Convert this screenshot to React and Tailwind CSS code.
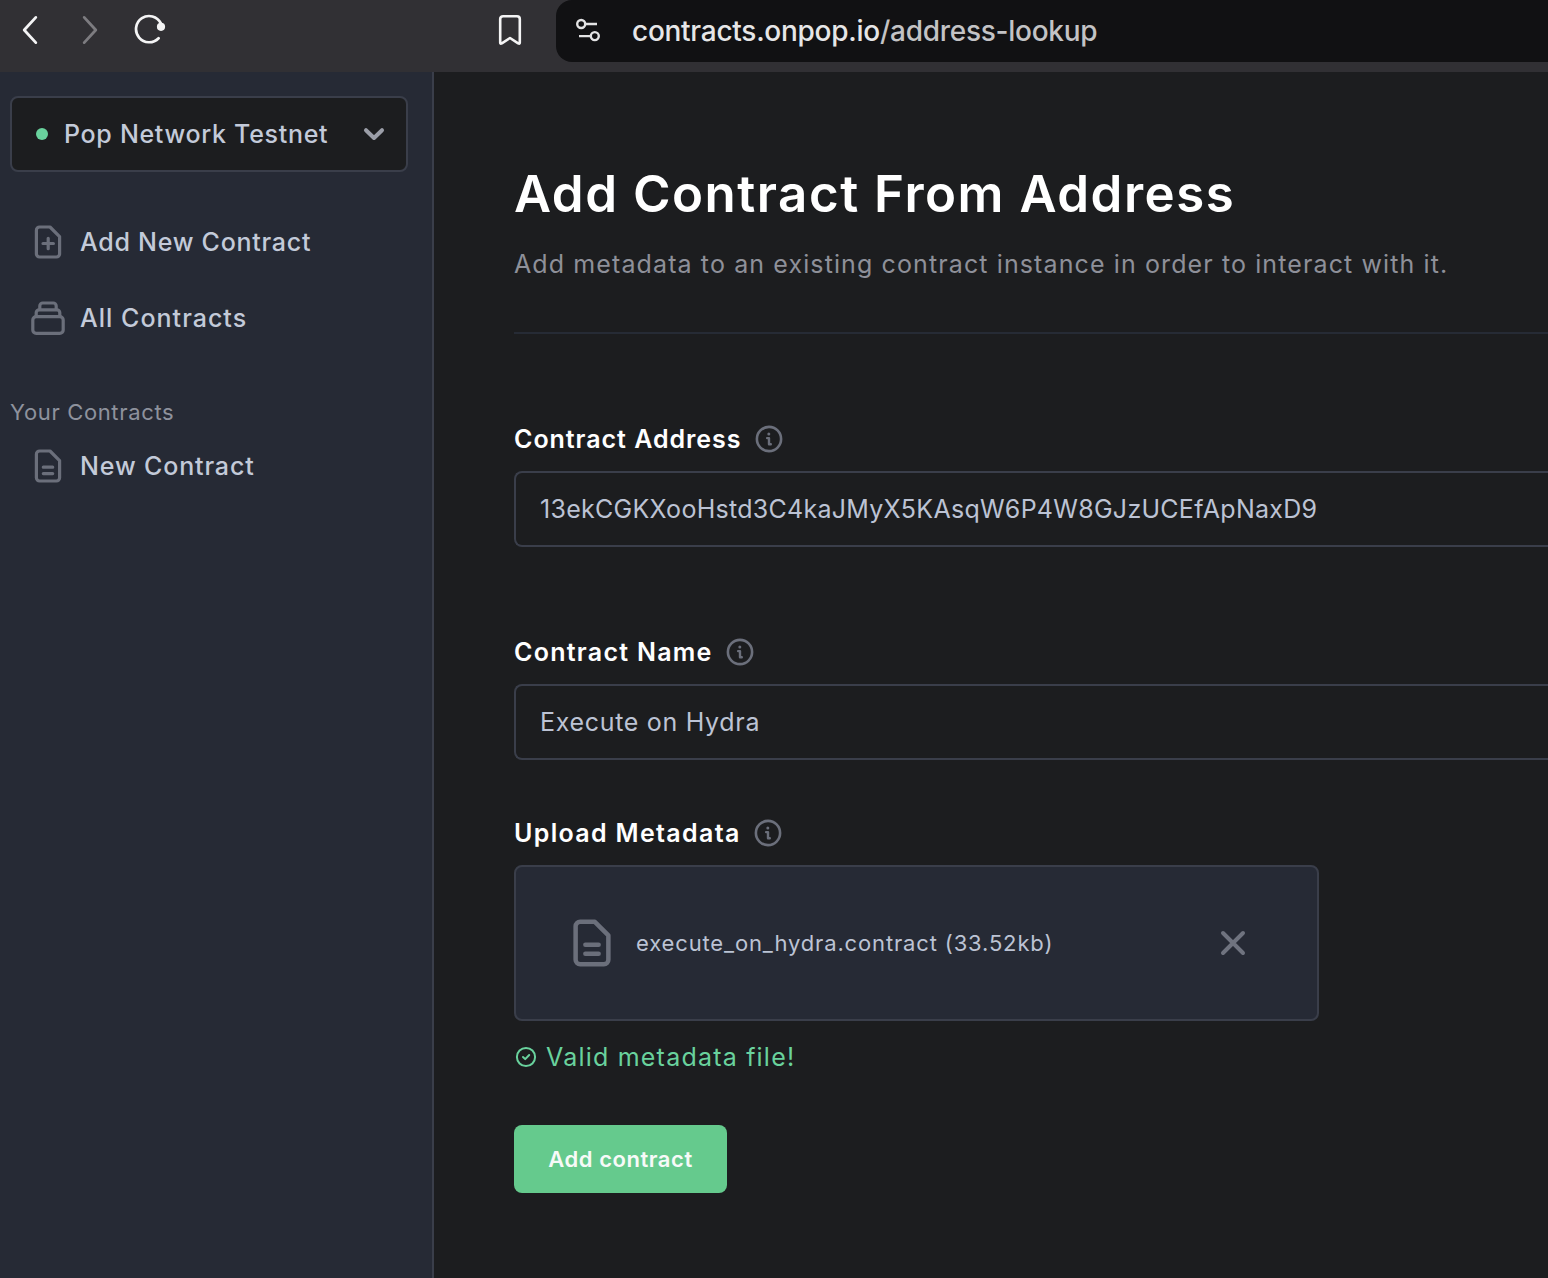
import React from "react";

function FileIcon({ className, children }) {
  return (
    <svg className={className} viewBox="0 0 28 34" fill="none" stroke="currentColor" strokeWidth="3.2" strokeLinecap="round" strokeLinejoin="round">
      <path d="M2.4 5.2A3.2 3.2 0 0 1 5.6 2H16L25.6 11.6V28.8A3.2 3.2 0 0 1 22.4 32H5.6A3.2 3.2 0 0 1 2.4 28.8Z" />
      {children}
    </svg>
  );
}

function DocumentIcon({ className }) {
  return (
    <FileIcon className={className}>
      <path d="M9.3 18.2H18.7M9.3 24.6H18.7" />
    </FileIcon>
  );
}

function StackIcon() {
  return (
    <svg className="h-[34px] w-[34px]" viewBox="0 0 34 34" fill="none" stroke="currentColor" strokeWidth="3.2" strokeLinejoin="round">
      <rect x="1.8" y="15.6" width="30.4" height="16.8" rx="3.4" />
      <path d="M5.2 15.4V11.8A3 3 0 0 1 8.2 8.8H25.8A3 3 0 0 1 28.8 11.8V15.4" />
      <path d="M8.8 8.6V5A3 3 0 0 1 11.8 2H22.2A3 3 0 0 1 25.2 5V8.6" />
    </svg>
  );
}

function InfoIcon() {
  return (
    <svg className="h-7 w-7 text-[#6b6f7b]" viewBox="0 0 28 28" fill="none" stroke="currentColor">
      <circle cx="14" cy="14" r="12.1" strokeWidth="2.6" />
      <circle cx="13.8" cy="8.9" r="1.5" fill="currentColor" stroke="none" />
      <path d="M12.1 13.1H14V19.2H15.8" strokeWidth="2.4" strokeLinecap="round" strokeLinejoin="round" />
    </svg>
  );
}

function Toolbar() {
  return (
    <header className="flex h-[72px] items-start bg-[#313034] text-[#f4f4f5]">
      <svg className="ml-[21px] mt-[14px] h-8 w-[18px] shrink-0" viewBox="0 0 18 32" fill="none" stroke="currentColor" strokeWidth="2.8" strokeLinecap="round" strokeLinejoin="round">
        <path d="M14.8 3.4L3.2 16L14.8 28.6" />
      </svg>
      <svg className="ml-[42px] mt-[14px] h-8 w-[18px] shrink-0 text-[#7d7c80]" viewBox="0 0 18 32" fill="none" stroke="currentColor" strokeWidth="2.8" strokeLinecap="round" strokeLinejoin="round">
        <path d="M3.2 3.4L14.8 16L3.2 28.6" />
      </svg>
      <svg className="ml-[35px] mt-[13px] h-8 w-8 shrink-0" viewBox="0 0 32 32" fill="none" stroke="currentColor" strokeWidth="2.7" strokeLinecap="round">
        <path d="M26.8 10.2A13.1 13.1 0 1 0 24.6 25.2" />
        <circle cx="27" cy="13.8" r="4.1" fill="currentColor" stroke="none" />
      </svg>
      <svg className="ml-[332px] mt-[14px] h-8 w-6 shrink-0" viewBox="0 0 24 32" fill="none" stroke="currentColor" strokeWidth="2.6" strokeLinejoin="round">
        <path d="M2.2 5A2.8 2.8 0 0 1 5 2.2H19A2.8 2.8 0 0 1 21.8 5V28.6Q21.8 30.4 20.2 29.3L12 24L3.8 29.3Q2.2 30.4 2.2 28.6Z" />
      </svg>
      <div className="ml-[34px] flex h-[62px] flex-1 items-center rounded-l-2xl bg-[#111113] pl-5">
        <svg className="h-[26px] w-[26px] shrink-0 text-[#e3e3e4]" viewBox="0 0 26 26" fill="none" stroke="currentColor" strokeWidth="2.4">
          <circle cx="5.2" cy="6" r="4" />
          <path d="M9.2 6H21M3 18.1H14.8" />
          <circle cx="18.8" cy="18.1" r="4" />
        </svg>
        <span className="ml-[30px] whitespace-nowrap pb-px text-[28px] font-medium leading-9 tracking-[-0.27px] text-[#c3c3c5]">
          <span className="text-[#e6e6e7]">contracts.onpop.io</span>/address-lookup
        </span>
      </div>
    </header>
  );
}

function Sidebar() {
  return (
    <aside className="flex w-[434px] shrink-0 flex-col border-r-2 border-[#3a3e4a] bg-[#262a35] pl-[10px] pr-6 pt-6 text-[25px] font-medium text-[#c3cad9]">
      <button className="flex h-[76px] items-center rounded-lg border-2 border-[#3a3e4a] bg-[#1c1d1f] pl-6">
        <span className="h-3 w-3 rounded-full bg-[#69d29d]" />
        <span className="ml-4 pt-0.5 tracking-[0.696px]">Pop Network Testnet</span>
        <svg className="ml-auto mr-5 h-6 w-6 text-[#9b9ea8]" viewBox="0 0 24 24" fill="none" stroke="currentColor" strokeWidth="4" strokeLinecap="round" strokeLinejoin="round">
          <path d="M4 8.2L12 16L20 8.2" />
        </svg>
      </button>
      <nav className="mt-8 flex flex-col">
        <a className="flex h-[76px] items-center">
          <span className="ml-[21px] flex w-[34px] justify-center text-[#6b6f7b]">
            <FileIcon className="h-[34px] w-7">
              <path d="M9 18.5H19.4M14.2 13.3V23.7" />
            </FileIcon>
          </span>
          <span className="ml-[15px] pt-0.5 tracking-[0.74px]">Add New Contract</span>
        </a>
        <a className="flex h-[76px] items-center">
          <span className="ml-[21px] flex w-[34px] justify-center text-[#6b6f7b]"><StackIcon /></span>
          <span className="ml-[15px] pt-0.5 tracking-[1.02px]">All Contracts</span>
        </a>
      </nav>
      <h2 className="mt-10 text-[22px] font-normal leading-8 tracking-[0.65px] text-[#8e929d]">Your Contracts</h2>
      <a className="flex h-[76px] items-center">
        <span className="ml-[21px] flex w-[34px] justify-center text-[#6b6f7b]"><DocumentIcon className="h-[34px] w-7" /></span>
        <span className="ml-[15px] pt-0.5 tracking-[0.86px]">New Contract</span>
      </a>
    </aside>
  );
}

function Label({ children, className }) {
  return (
    <div className="flex h-8 items-center gap-[13px] text-[25px] font-semibold text-white">
      <span className={className}>{children}</span>
      <InfoIcon />
    </div>
  );
}

function Field({ children, className }) {
  return (
    <div className="mt-4 flex h-[76px] items-center rounded-l-lg border-2 border-r-0 border-[#3a3e4a] pl-6 text-[25px] text-[#bcc3d4]">
      <span className={className}>{children}</span>
    </div>
  );
}

export default function App() {
  return (
    <div className="flex h-[1278px] w-[1548px] flex-col overflow-hidden bg-[#1c1d1f] font-['Inter',sans-serif]">
      <Toolbar />
      <div className="flex min-h-0 flex-1">
        <Sidebar />
        <main className="flex min-w-0 flex-1 flex-col pl-20 pt-[90px]">
          <h1 className="whitespace-nowrap text-[51px] font-semibold leading-[64px] tracking-[1.52px] text-white">Add Contract From Address</h1>
          <p className="mt-[22px] whitespace-nowrap text-[25px] leading-8 tracking-[1.11px] text-[#8e9099]">
            Add metadata to an existing contract instance in order to interact with it.
          </p>
          <div className="mt-[52px] border-t-2 border-[#262b35]" />
          <div className="mt-[89px]">
            <Label className="pt-0.5 tracking-[0.96px]">Contract Address</Label>
            <Field className="pt-0.5 tracking-[0.27px]">13ekCGKXooHstd3C4kaJMyX5KAsqW6P4W8GJzUCEfApNaxD9</Field>
          </div>
          <div className="mt-[89px]">
            <Label className="pt-0.5 tracking-[1.27px]">Contract Name</Label>
            <Field className="pt-0.5 tracking-[0.69px]">Execute on Hydra</Field>
          </div>
          <div className="mt-[57px]">
            <Label className="pt-0.5 tracking-[1.33px]">Upload Metadata</Label>
            <div className="mt-4 flex h-[156px] w-[805px] items-center rounded-lg border-2 border-[#3a3e4a] bg-[#262a35] pl-14">
              <DocumentIcon className="h-12 w-10 text-[#6b6f7b]" />
              <span className="ml-6 text-[22px] tracking-[0.85px] text-[#bcc3d4]">execute_on_hydra.contract (33.52kb)</span>
              <svg className="ml-auto mr-[70px] h-7 w-7 text-[#6f737f]" viewBox="0 0 28 28" stroke="currentColor" strokeWidth="4" strokeLinecap="round">
                <path d="M4 4L24 24M24 4L4 24" />
              </svg>
            </div>
          </div>
          <div className="mt-5 flex h-8 items-center gap-2 text-[25px] text-[#69d29d]">
            <svg className="h-6 w-6" viewBox="0 0 24 24" fill="none" stroke="currentColor" strokeWidth="2" strokeLinecap="round" strokeLinejoin="round">
              <circle cx="12" cy="12" r="9.1" />
              <path d="M9 12L11.2 14.1L15.2 10" />
            </svg>
            <span className="pt-0.5 tracking-[1.21px]">Valid metadata file!</span>
          </div>
          <button className="mt-[52px] flex h-[68px] w-[213px] items-center justify-center rounded-lg bg-[#65ca8d] text-[22px] font-semibold tracking-[0.55px] text-[#f7faf8]">
            Add contract
          </button>
        </main>
      </div>
    </div>
  );
}
